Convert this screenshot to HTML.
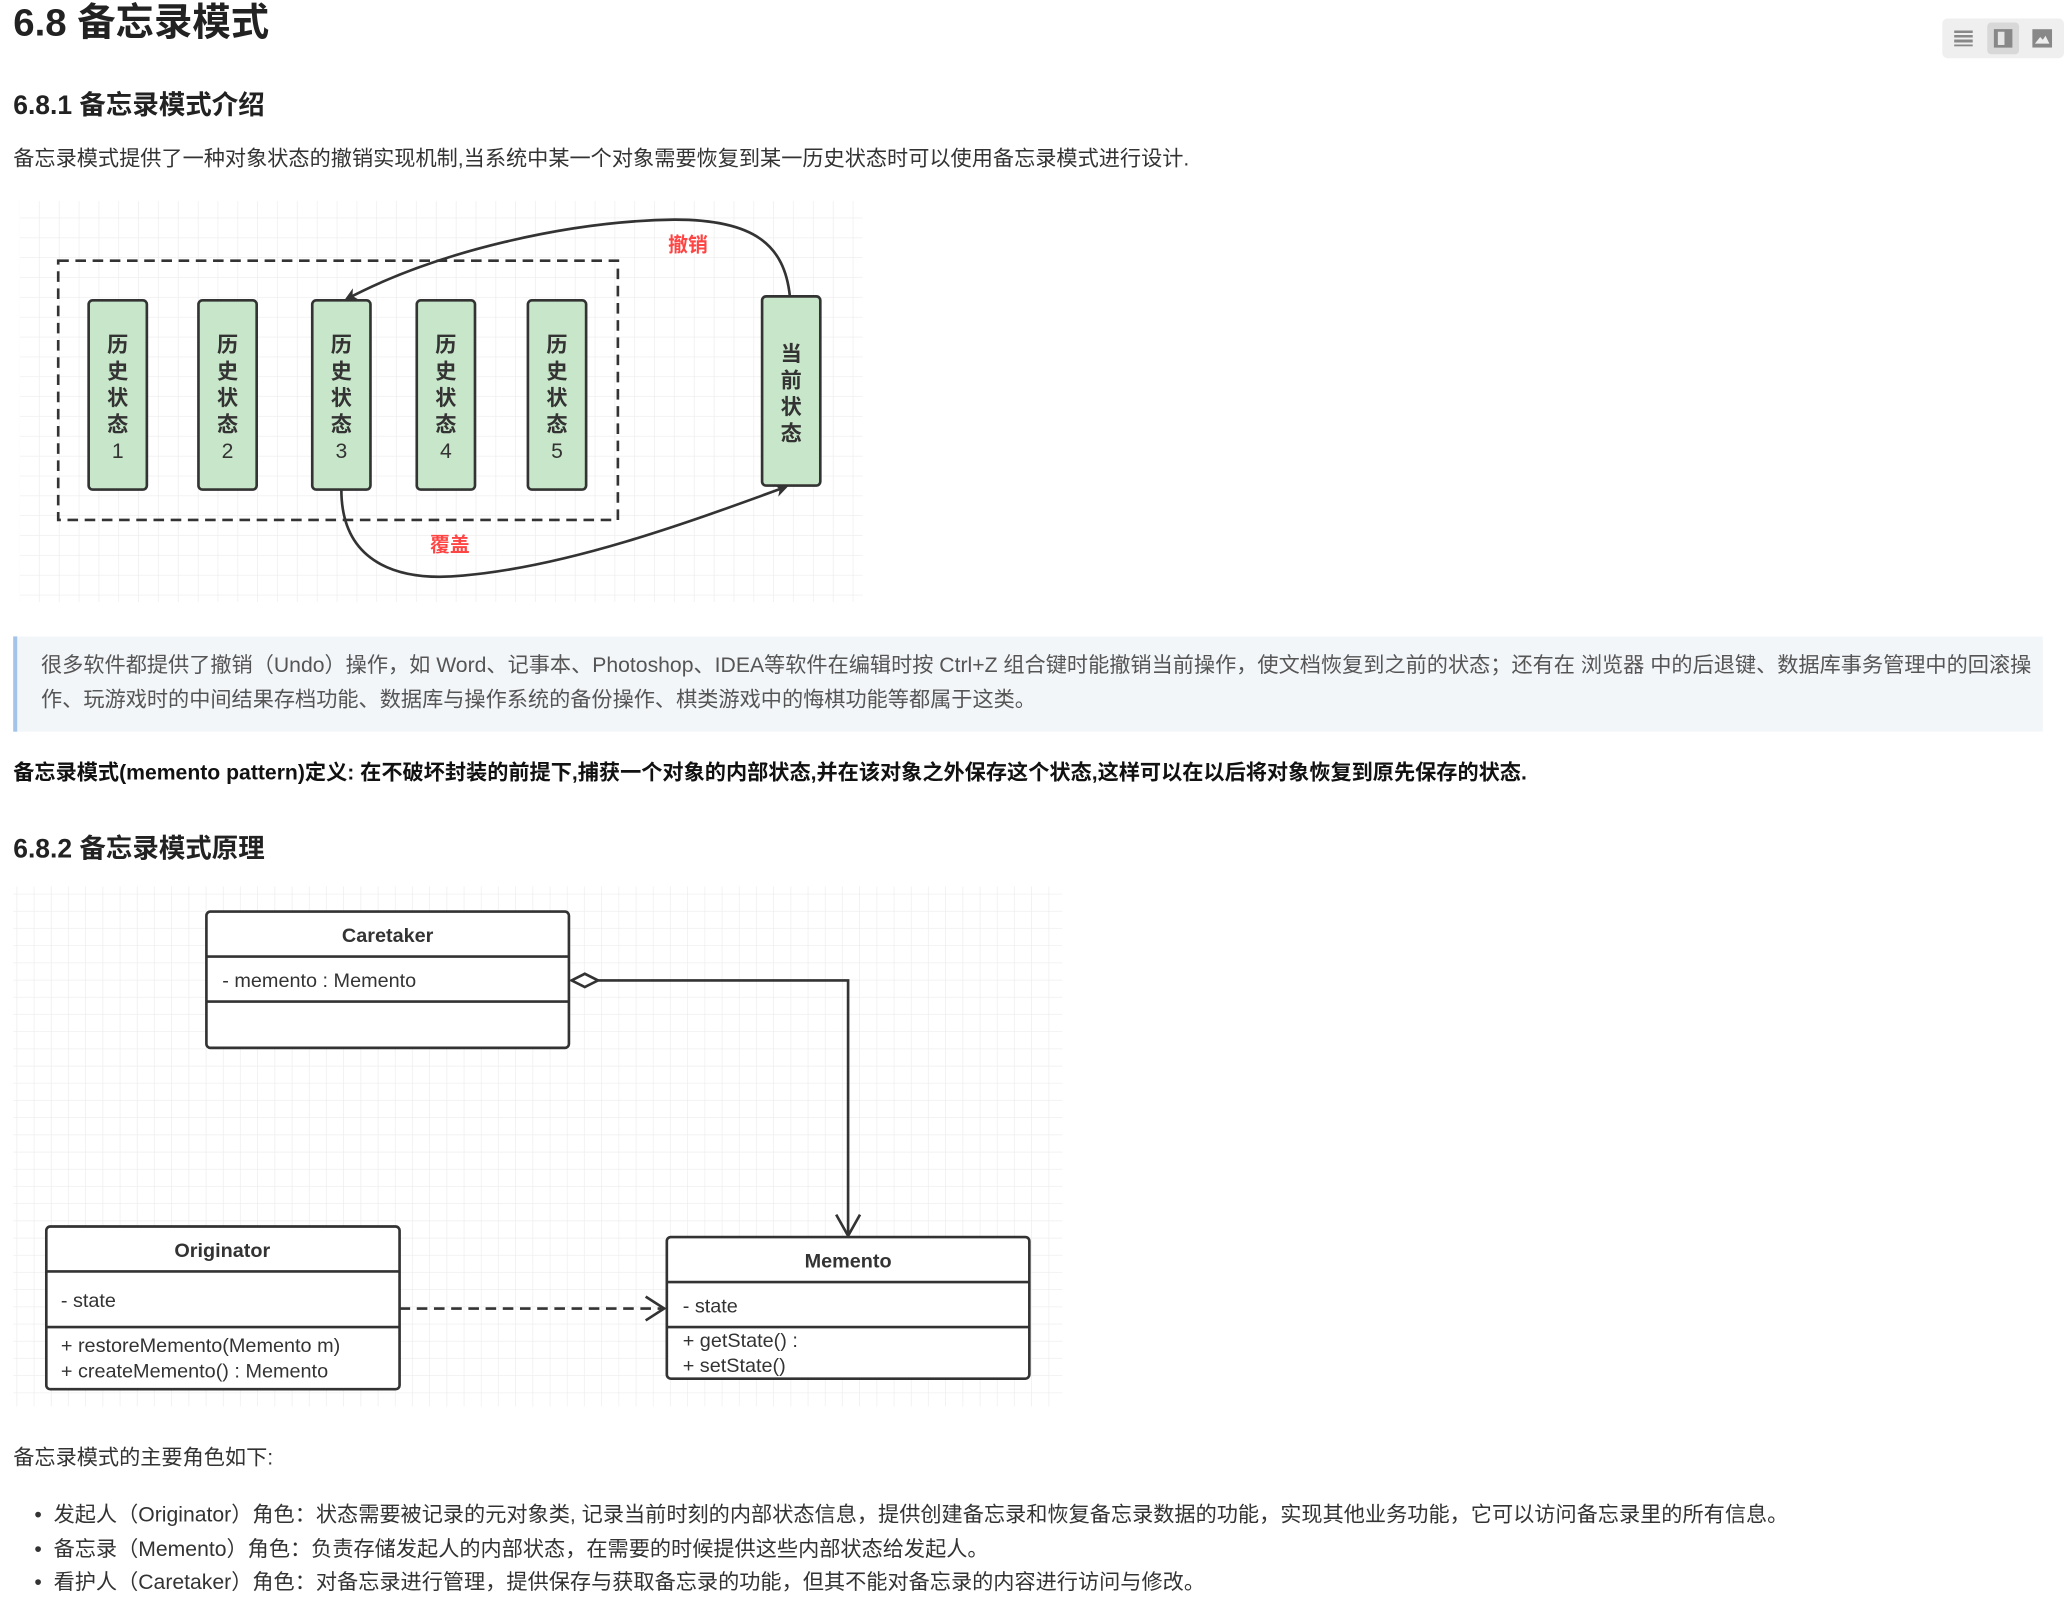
<!DOCTYPE html>
<html><head><meta charset="utf-8"><style>
html,body{margin:0;padding:0;background:#fff;overflow:hidden}
body{width:2064px;height:1620px}
#w{position:absolute;left:0;top:0;width:1560px;height:1225px;transform:scale(1.32308);transform-origin:0 0;font-family:"Liberation Sans","Noto Sans CJK SC",sans-serif;color:#333}
.a{position:absolute;white-space:nowrap}
.p{font-size:16px;color:#333}
</style></head><body><div id="w">
<div class="a" style="left:10px;top:0px;font-size:29px;font-weight:bold;color:#222;line-height:36px">6.8 备忘录模式</div>
<div class="a" style="left:1468px;top:14px;width:92px;height:30px;background:#efefef;border-radius:4px">
 <div style="position:absolute;left:9px;top:9px;width:14px;height:12px;background:repeating-linear-gradient(#888 0 2px,#efefef 2px 3.5px)"></div>
 <div style="position:absolute;left:34px;top:3px;width:24px;height:24px;background:#d8d8d8;border-radius:3px"></div>
 <div style="position:absolute;left:39px;top:8px;width:14px;height:14px;background:#888"></div>
 <div style="position:absolute;left:42px;top:10px;width:5px;height:10px;background:#e6e6e6"></div>
 <svg style="position:absolute;left:68px;top:8px" width="15" height="14"><rect width="15" height="14" fill="#888"/><path d="M2 11 L6 6 L8 8 L10 5 L13 11Z" fill="#eee"/></svg>
</div>
<div class="a" style="left:10px;top:67px;font-size:20px;font-weight:bold;color:#222;line-height:26px">6.8.1 备忘录模式介绍</div>
<div class="a p" style="left:10px;top:111px;line-height:20px">备忘录模式提供了一种对象状态的撤销实现机制,当系统中某一个对象需要恢复到某一历史状态时可以使用备忘录模式进行设计.</div>

<svg class="a" style="left:0;top:0" width="1560" height="1225">
<defs>
<pattern id="g" width="15" height="15" patternUnits="userSpaceOnUse"><path d="M15 0V15H0" fill="none" stroke="#ececec" stroke-width="1"/></pattern>
<pattern id="g2" width="13" height="13" patternUnits="userSpaceOnUse"><path d="M13 0V13H0" fill="none" stroke="#ececec" stroke-width="1"/></pattern>
<marker id="ah" markerWidth="10" markerHeight="10" refX="8" refY="5" orient="auto" markerUnits="userSpaceOnUse"><path d="M0 0L10 5L0 10L3 5Z" fill="#333"/></marker>
</defs>
<rect x="15" y="152" width="637" height="303" fill="url(#g)"/>
<rect x="44" y="197" width="423" height="196" fill="none" stroke="#333" stroke-width="2" stroke-dasharray="8,5"/>
<g fill="#c8e6c9" stroke="#333" stroke-width="2">
<rect x="67" y="227" width="44" height="143" rx="3"/>
<rect x="150" y="227" width="44" height="143" rx="3"/>
<rect x="236" y="227" width="44" height="143" rx="3"/>
<rect x="315" y="227" width="44" height="143" rx="3"/>
<rect x="399" y="227" width="44" height="143" rx="3"/>
<rect x="576" y="224" width="44" height="143" rx="3"/>
</g>
<g font-size="16" font-weight="bold" fill="#333" text-anchor="middle" font-family="Liberation Sans,Noto Sans CJK SC,sans-serif">
<text x="89" y="266">历</text><text x="89" y="286">史</text><text x="89" y="306">状</text><text x="89" y="326">态</text><text x="89" y="346" font-weight="normal">1</text>
<text x="172" y="266">历</text><text x="172" y="286">史</text><text x="172" y="306">状</text><text x="172" y="326">态</text><text x="172" y="346" font-weight="normal">2</text>
<text x="258" y="266">历</text><text x="258" y="286">史</text><text x="258" y="306">状</text><text x="258" y="326">态</text><text x="258" y="346" font-weight="normal">3</text>
<text x="337" y="266">历</text><text x="337" y="286">史</text><text x="337" y="306">状</text><text x="337" y="326">态</text><text x="337" y="346" font-weight="normal">4</text>
<text x="421" y="266">历</text><text x="421" y="286">史</text><text x="421" y="306">状</text><text x="421" y="326">态</text><text x="421" y="346" font-weight="normal">5</text>
<text x="598" y="273">当</text><text x="598" y="293">前</text><text x="598" y="313">状</text><text x="598" y="333">态</text>
</g>
<path d="M597 224 C593 185 570 166 510 166 C430 167 330 190 262 226" fill="none" stroke="#333" stroke-width="2" marker-end="url(#ah)"/>
<path d="M258 370 C258 425 300 440 350 435 C430 428 520 395 594 368" fill="none" stroke="#333" stroke-width="2" marker-end="url(#ah)"/>
<text x="520" y="190" font-size="15" font-weight="bold" fill="#f44" text-anchor="middle" font-family="Liberation Sans,Noto Sans CJK SC,sans-serif">撤销</text>
<text x="340" y="417" font-size="15" font-weight="bold" fill="#f44" text-anchor="middle" font-family="Liberation Sans,Noto Sans CJK SC,sans-serif">覆盖</text>

<rect x="10" y="670" width="793" height="393" fill="url(#g2)"/>
<g fill="#fff" stroke="#333" stroke-width="2">
<rect x="156" y="689" width="274" height="103" rx="3"/>
<rect x="35" y="927" width="267" height="123" rx="3"/>
<rect x="504" y="935" width="274" height="107" rx="3"/>
</g>
<g stroke="#333" stroke-width="2">
<path d="M156 723H430M156 757H430M35 961H302M35 1003H302M504 969H778M504 1003H778"/>
</g>
<path d="M452 741H641V933" fill="none" stroke="#333" stroke-width="2"/>
<path d="M432 741L442 736L452 741L442 746Z" fill="#fff" stroke="#333" stroke-width="2"/>
<path d="M632 918L641 934L650 918" fill="none" stroke="#333" stroke-width="2"/>
<path d="M302 989H500" stroke="#333" stroke-width="2" stroke-dasharray="8,5"/>
<path d="M488 980L502 989L488 998" fill="none" stroke="#333" stroke-width="2"/>
<g font-size="15" fill="#333" font-family="Liberation Sans,sans-serif">
<text x="293" y="712" text-anchor="middle" font-weight="bold">Caretaker</text>
<text x="168" y="746">- memento : Memento</text>
<text x="168" y="950" text-anchor="middle" font-weight="bold">Originator</text>
<text x="46" y="988">- state</text>
<text x="46" y="1022">+ restoreMemento(Memento m)</text>
<text x="46" y="1041">+ createMemento() : Memento</text>
<text x="641" y="958" text-anchor="middle" font-weight="bold">Memento</text>
<text x="516" y="992">- state</text>
<text x="516" y="1018">+ getState() :</text>
<text x="516" y="1037">+ setState()</text>
</g>
</svg>

<div class="a" style="left:10px;top:481px;width:1531px;height:72px;background:#f3f6f9;border-left:3px solid #a3c4e8"></div>
<div class="a p" style="left:31px;top:491px;width:1505px;white-space:normal;color:#555;line-height:26px">很多软件都提供了撤销（Undo）操作，如 Word、记事本、Photoshop、IDEA等软件在编辑时按 Ctrl+Z 组合键时能撤销当前操作，使文档恢复到之前的状态；还有在 浏览器 中的后退键、数据库事务管理中的回滚操作、玩游戏时的中间结果存档功能、数据库与操作系统的备份操作、棋类游戏中的悔棋功能等都属于这类。</div>
<div class="a p" style="left:10px;top:575px;font-weight:bold;color:#111;line-height:20px">备忘录模式(memento pattern)定义: 在不破坏封装的前提下,捕获一个对象的内部状态,并在该对象之外保存这个状态,这样可以在以后将对象恢复到原先保存的状态.</div>
<div class="a" style="left:10px;top:629px;font-size:20px;font-weight:bold;color:#222;line-height:26px">6.8.2 备忘录模式原理</div>
<div class="a p" style="left:10px;top:1093px;line-height:20px">备忘录模式的主要角色如下:</div>
<div class="a p" style="left:26px;top:1136px;line-height:20px">•&nbsp; 发起人（Originator）角色：状态需要被记录的元对象类, 记录当前时刻的内部状态信息，提供创建备忘录和恢复备忘录数据的功能，实现其他业务功能，它可以访问备忘录里的所有信息。</div>
<div class="a p" style="left:26px;top:1162px;line-height:20px">•&nbsp; 备忘录（Memento）角色：负责存储发起人的内部状态，在需要的时候提供这些内部状态给发起人。</div>
<div class="a p" style="left:26px;top:1187px;line-height:20px">•&nbsp; 看护人（Caretaker）角色：对备忘录进行管理，提供保存与获取备忘录的功能，但其不能对备忘录的内容进行访问与修改。</div>
</div></body></html>
